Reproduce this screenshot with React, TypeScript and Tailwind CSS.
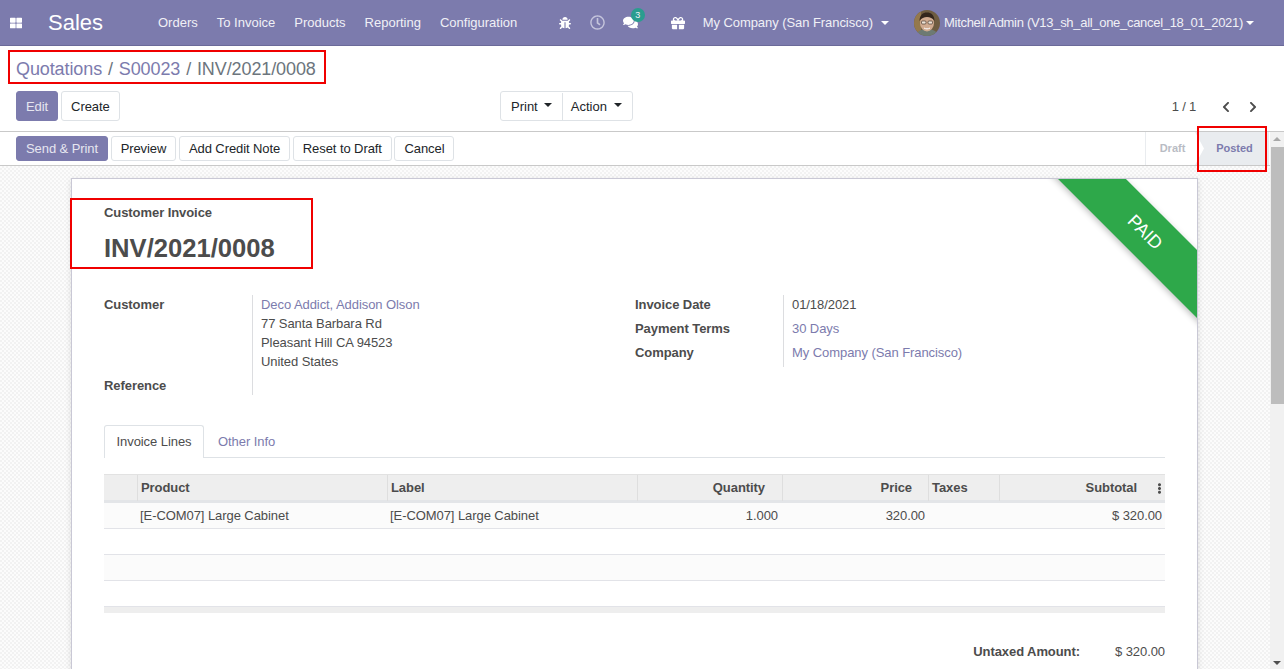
import { FaBug, FaChevronLeft, FaChevronRight, FaComments, FaEllipsisV, FaGift, FaRegClock, FaThLarge } from "react-icons/fa";

const Caret = ({ className }: { className: string }) => (
  <span className={`inline-block w-0 h-0 border-x-[4px] border-t-[4px] border-x-transparent ${className}`} />
);

const Avatar = () => (
  <svg width="26" height="26" viewBox="0 0 26 26" className="rounded-full shrink-0">
    <rect width="26" height="26" fill="#6e5c40" />
    <rect x="0" y="0" width="7" height="26" fill="#94784c" />
    <path d="M2 26c1-5 5-7 11-7s10 2 11 7z" fill="#6d7a73" />
    <ellipse cx="13" cy="13" rx="7" ry="8.5" fill="#d0ab90" />
    <path d="M5.5 11c0-6 3.500-8.500 7.500-8.500s7.500 2.500 7.500 8.500c-2-3-4.500-4-7.500-4s-5.500 1-7.500 4z" fill="#33261c" />
    <rect x="7.500" y="11" width="4.500" height="3" rx="1" fill="#efe4d6" stroke="#33261c" strokeWidth=".6" />
    <rect x="14" y="11" width="4.500" height="3" rx="1" fill="#efe4d6" stroke="#33261c" strokeWidth=".6" />
    <path d="M10 18c2 1.200 4 1.200 6 0" stroke="#fff" strokeWidth="1" fill="none" />
  </svg>
);

const Button = ({ label, primary, h = "h-[30px] pt-[1px]" }: { label: string; primary?: boolean; h?: string }) => (
  <button
    className={`${h} px-[9px] rounded-[3px] border text-[13px] tracking-[-0.08px] ${
      primary ? "bg-[#7c7bad] border-[#7c7bad] text-[#e6e6f0]" : "bg-white border-[#dee2e6] text-[#212529]"
    }`}
  >
    {label}
  </button>
);

const menu = ["Orders", "To Invoice", "Products", "Reporting", "Configuration"];

const Navbar = () => (
  <div className="h-[46px] shrink-0 flex items-center bg-[#7c7bad] border-b border-[#6b6a99] text-[#f0f0f6] text-[13px]">
    <FaThLarge className="ml-[10px] text-white text-[12px]" />
    <span className="ml-[26px] text-[22px] text-white w-[100.5px]">Sales</span>
    <div className="flex">
      {menu.map((m) => (
        <span key={m} className="px-[9.5px]">{m}</span>
      ))}
    </div>
    <div className="ml-auto flex items-center">
      <FaBug className="text-white text-[12px] mr-[19px]" />
      <FaRegClock className="text-[#c5c5dc] text-[15px] mr-[18px]" />
      <span className="relative mr-[33px]">
        <FaComments className="text-white text-[15px]" />
        <span className="absolute left-[8px] -top-[7px] w-[14px] h-[14px] rounded-full bg-[#2a9d8f] text-[9px] leading-[14px] text-center">3</span>
      </span>
      <FaGift className="text-white text-[14px] mr-[18px]" />
      <span className="tracking-[-0.06px]">My Company (San Francisco)</span>
      <Caret className="ml-[8px] mr-[25px] border-t-white" />
      <Avatar />
      <span className="ml-[4px] tracking-[-0.3px]">Mitchell Admin (V13_sh_all_one_cancel_18_01_2021)</span>
      <Caret className="ml-[3px] mr-[30px] border-t-white" />
    </div>
  </div>
);

const ControlPanel = () => (
  <div className="h-[86px] shrink-0 bg-white border-b border-[#c9c9c9] px-4 pt-[11px]">
    <div className="h-[25px] text-[18px] leading-[25px] text-[#7c7bad] whitespace-pre tracking-[-0.1px]">
      Quotations <span className="px-[1px] text-[#6c757d]">/</span> S00023 <span className="px-[1px] text-[#6c757d]">/</span> <span className="text-[#6c757d]">INV/2021/0008</span>
    </div>
    <div className="mt-[9px] flex items-center">
      <div className="w-[484px] flex gap-[3px]">
        <Button label="Edit" primary />
        <Button label="Create" />
      </div>
      <div className="flex border border-[#dee2e6] rounded-[3px] h-[30px] pt-[1px] text-[13px] text-[#212529]">
        <span className="pl-[10px] pr-[10px] flex items-center gap-[6px] border-r border-[#dee2e6]">Print <Caret className="-mt-[3px] border-t-[#212529]" /></span>
        <span className="pl-[8px] pr-[10px] flex items-center gap-[7px]">Action <Caret className="-mt-[3px] border-t-[#212529]" /></span>
      </div>
      <div className="ml-auto flex items-center pt-[1px] text-[13px] text-[#4c4c4c] pr-[9px]">
        <span className="tracking-[-0.2px]">1 / 1</span>
        <FaChevronLeft className="ml-[24px] text-[12px]" />
        <FaChevronRight className="ml-[15px] text-[12px]" />
      </div>
    </div>
  </div>
);

const StatusBar = () => (
  <div className="h-[34px] shrink-0 bg-white border-b border-[#c9c9c9] flex items-center pl-4 pr-[1px]">
    <div className="flex gap-[2.6px]">
      <Button label="Send & Print" primary h="h-[25px]" />
      <Button label="Preview" h="h-[25px]" />
      <Button label="Add Credit Note" h="h-[25px]" />
      <Button label="Reset to Draft" h="h-[25px]" />
      <Button label="Cancel" h="h-[25px]" />
    </div>
    <div className="ml-auto h-full flex text-[11px] font-bold">
      <span className="w-[50px] pl-[4px] border-l border-[#e9ecef] flex items-center justify-center text-[#b9bcc4]">Draft</span>
      <span className="relative w-[74px] pl-[5px] bg-[#e9ecef] flex items-center justify-center text-[#7c7bad]">
        Posted
        <svg width="10" height="33" viewBox="0 0 10 33" className="absolute left-0 top-0">
          <polygon points="0,0 9,16.500 0,33" fill="#fff" />
        </svg>
      </span>
    </div>
  </div>
);

const cols = "grid grid-cols-[33px_250px_250px_145px_146px_71px_166px]";
const head = "border-l border-[#dedede] px-[3px] leading-[26px]";

const InvoiceTable = () => (
  <div className="mt-[16px] text-[13px]">
    <div className={`${cols} h-[29px] bg-[#eeeeee] border-t border-[#e2e2e2] border-b-[3px] border-b-[#e3e5e8] font-bold`}>
      <div />
      <div className={head}>Product</div>
      <div className={head}>Label</div>
      <div className={`${head} text-right pr-[17px]`}>Quantity</div>
      <div className={`${head} text-right pr-[16px]`}>Price</div>
      <div className={head}>Taxes</div>
      <div className={`${head} relative text-right pr-[28px]`}>
        Subtotal
        <FaEllipsisV className="absolute right-0 top-[8px] text-[11px] text-[#4c4c4c]" />
      </div>
    </div>
    <div className={`${cols} h-[26px] bg-[#fbfbfb] border-b border-[#e2e3e8] leading-[25px]`}>
      <div />
      <div className="pl-[3px] whitespace-nowrap">[E-COM07] Large Cabinet</div>
      <div className="pl-[3px] whitespace-nowrap">[E-COM07] Large Cabinet</div>
      <div className="text-right pr-[4px]">1.000</div>
      <div className="text-right pr-[3px]">320.00</div>
      <div />
      <div className="text-right pr-[3px]">$ 320.00</div>
    </div>
    <div className="h-[26px] bg-white border-b border-[#e2e3e8]" />
    <div className="h-[26px] bg-[#fbfbfb] border-b border-[#e2e3e8]" />
    <div className="h-[26px] bg-white border-b border-[#e2e3e8]" />
    <div className="h-[6px] bg-[#eeeeee]" />
  </div>
);

const Sheet = () => (
  <div className="relative w-[1127px] h-[520px] bg-white border border-[#c9c8d5] shadow-[0_2px_6px_rgba(0,0,0,0.12)] pl-[32px] pr-[32px] pt-[25px] text-[13px] text-[#4c4c4c] tracking-[-0.07px]">
    {/* ribbon */}
    <div className="absolute top-0 right-0 w-[150px] h-[150px] overflow-hidden">
      <div className="absolute top-[29px] -right-[58px] w-[220px] h-[48px] rotate-45 bg-[#2ea84a] shadow-[0_2px_6px_rgba(0,0,0,0.25)] flex items-center justify-center text-white text-[18px]">
        PAID
      </div>
    </div>

    <div className="font-bold leading-[18px]">Customer Invoice</div>
    <div className="mt-[8px] text-[25.6px] leading-[36px] font-bold tracking-normal">INV/2021/0008</div>

    <div className="mt-[29px] flex">
      <div className="w-[149px] h-[100px] leading-[19px] border-r border-[#dcdde0] flex flex-col justify-between">
        <span className="font-bold">Customer</span>
        <span className="font-bold">Reference</span>
      </div>
      <div className="w-[382px] pl-[8px] leading-[19px]">
        <div className="text-[#7c7bad]">Deco Addict, Addison Olson</div>
        <div>77 Santa Barbara Rd</div>
        <div>Pleasant Hill CA 94523</div>
        <div>United States</div>
      </div>
      <div className="w-[149px] h-[72px] leading-[24px] border-r border-[#dcdde0] font-bold whitespace-nowrap">
        <div className="-mt-[2px]">Invoice Date</div>
        <div>Payment Terms</div>
        <div>Company</div>
      </div>
      <div className="pl-[8px] leading-[24px]">
        <div className="-mt-[2px]">01/18/2021</div>
        <div className="text-[#7c7bad]">30 Days</div>
        <div className="text-[#7c7bad]">My Company (San Francisco)</div>
      </div>
    </div>

    <div className="mt-[30px] h-[33px] flex border-b border-[#dee2e6]">
      <span className="w-[100px] h-[33px] bg-white border border-b-0 border-[#dee2e6] rounded-t-[3px] flex items-center justify-center">Invoice Lines</span>
      <span className="ml-[14px] pt-[1px] flex items-center text-[#7c7bad]">Other Info</span>
    </div>

    <InvoiceTable />

    <div className="mt-[29px] flex justify-end font-bold">
      <span>Untaxed Amount:</span>
      <span className="w-[85px] text-right font-normal">$ 320.00</span>
    </div>
  </div>
);

const Scrollbar = () => (
  <div className="w-[14px] shrink-0 bg-[#f1f1f1] flex flex-col items-center">
    <span className="mt-[5px] w-0 h-0 border-x-[4px] border-b-[4px] border-x-transparent border-b-[#a8a8a8]" />
    <div className="mt-[6px] w-[13px] h-[257px] bg-[#bdbdbd]" />
    <span className="mt-auto mb-[4px] w-0 h-0 border-x-[4px] border-t-[4px] border-x-transparent border-t-[#505050]" />
  </div>
);

export default function App() {
  return (
    <div className="relative w-[1284px] h-[669px] overflow-hidden flex flex-col bg-white [font-family:'Liberation_Sans',Arial,sans-serif]">
      <Navbar />
      <ControlPanel />
      <div className="flex-1 min-h-0 flex">
        <div className="flex-1 min-w-0 flex flex-col">
          <StatusBar />
          <div className="flex-1 min-h-0 overflow-hidden pt-[12px] pl-[71px] bg-[repeating-conic-gradient(#f2f2f2_0_25%,#fcfcfc_0_50%)] bg-[length:4px_4px]">
            <Sheet />
          </div>
        </div>
        <Scrollbar />
      </div>

      {/* red annotation boxes */}
      <div className="absolute left-[8px] top-[50px] w-[318px] h-[34px] border-2 border-[#f00000]" />
      <div className="absolute left-[1197px] top-[126px] w-[70px] h-[46px] border-2 border-[#f00000]" />
      <div className="absolute left-[70px] top-[198px] w-[243px] h-[71px] border-2 border-[#f00000]" />
    </div>
  );
}
